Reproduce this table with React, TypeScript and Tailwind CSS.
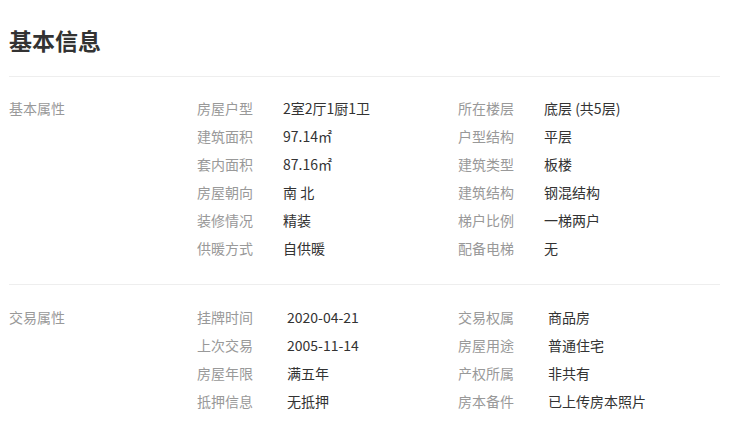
const basic: [string, string][][] = [
  [['房屋户型', '2室2厅1厨1卫'], ['所在楼层', '底层 (共5层)']],
  [['建筑面积', '97.14㎡'], ['户型结构', '平层']],
  [['套内面积', '87.16㎡'], ['建筑类型', '板楼']],
  [['房屋朝向', '南 北'], ['建筑结构', '钢混结构']],
  [['装修情况', '精装'], ['梯户比例', '一梯两户']],
  [['供暖方式', '自供暖'], ['配备电梯', '无']],
]

const trade: [string, string][][] = [
  [['挂牌时间', '2020-04-21'], ['交易权属', '商品房']],
  [['上次交易', '2005-11-14'], ['房屋用途', '普通住宅']],
  [['房屋年限', '满五年'], ['产权所属', '非共有']],
  [['抵押信息', '无抵押'], ['房本备件', '已上传房本照片']],
]

function Section({
  title,
  rows,
  wide,
}: {
  title: string
  rows: [string, string][][]
  wide?: boolean
}) {
  return (
    <div className="flex">
      <div className="w-[188px] h-[28px] leading-[28px] text-[14px] text-[#999]">{title}</div>
      <div className="flex flex-col">
        {rows.map((row, i) => (
          <div key={i} className="flex h-[28px] items-center text-[14px]">
            {row.map(([label, value]) => (
              <div key={label} className="flex w-[261px]">
                <span className={(wide ? 'w-[90px]' : 'w-[86px]') + ' text-[#999]'}>{label}</span>
                <span className="text-[#333]">{value}</span>
              </div>
            ))}
          </div>
        ))}
      </div>
    </div>
  )
}

export default function App() {
  return (
    <div
      className="w-[740px] h-[434px] bg-white pl-[9px] pr-[20px] overflow-hidden"
      style={{ fontFamily: '"Microsoft YaHei", "Noto Sans CJK SC", sans-serif' }}
    >
      <h1 className="pt-[26px] leading-[28px] text-[23px] font-bold text-[#333]">基本信息</h1>
      <div className="mt-[22px] h-px bg-[#eeeeee]" />
      <div className="pt-[17px] pb-[22px]">
        <Section title="基本属性" rows={basic} />
      </div>
      <div className="h-px bg-[#eeeeee]" />
      <div className="pt-[18px]">
        <Section title="交易属性" rows={trade} wide />
      </div>
    </div>
  )
}
